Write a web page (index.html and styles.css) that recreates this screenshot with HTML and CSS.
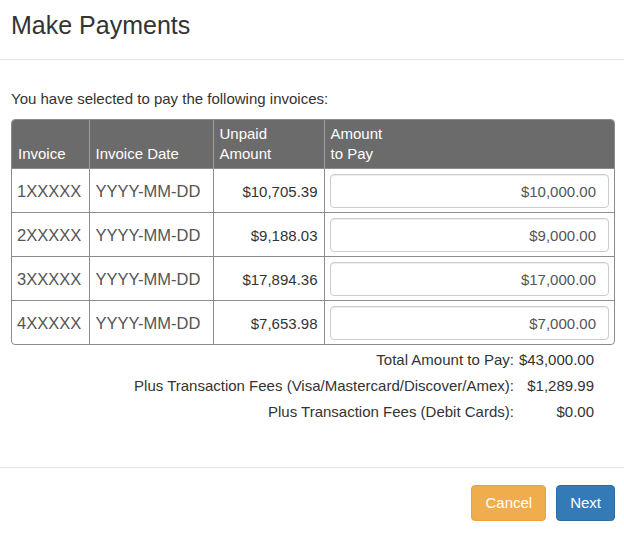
FILE: index.html
```html
<!DOCTYPE html>
<html lang="en">
<head>
  <meta charset="UTF-8">
  <meta name="viewport" content="width=device-width, initial-scale=1.0">
  <title>Make Payments</title>
  <link rel="stylesheet" href="styles.css">
</head>
<body>
  <!-- Modal Header -->
  <div class="modal-header">
    <h4 class="modal-title">Make Payments</h4>
  </div>

  <!-- Modal Body -->
  <div class="modal-body">
    <p class="intro">You have selected to pay the following invoices:</p>

    <div class="invoice-table-wrap">
      <table class="invoice-table">
        <thead>
          <tr>
            <th class="col-invoice">Invoice</th>
            <th class="col-date">Invoice Date</th>
            <th class="col-unpaid">Unpaid<br>Amount</th>
            <th class="col-pay">Amount<br>to Pay</th>
          </tr>
        </thead>
        <tbody>
          <tr>
            <td class="invoice-no">1XXXXX</td>
            <td class="invoice-date">YYYY-MM-DD</td>
            <td class="amount">$10,705.39</td>
            <td class="pay-cell"><input class="pay-input" type="text" value="$10,000.00"></td>
          </tr>
          <tr>
            <td class="invoice-no">2XXXXX</td>
            <td class="invoice-date">YYYY-MM-DD</td>
            <td class="amount">$9,188.03</td>
            <td class="pay-cell"><input class="pay-input" type="text" value="$9,000.00"></td>
          </tr>
          <tr>
            <td class="invoice-no">3XXXXX</td>
            <td class="invoice-date">YYYY-MM-DD</td>
            <td class="amount">$17,894.36</td>
            <td class="pay-cell"><input class="pay-input" type="text" value="$17,000.00"></td>
          </tr>
          <tr>
            <td class="invoice-no">4XXXXX</td>
            <td class="invoice-date">YYYY-MM-DD</td>
            <td class="amount">$7,653.98</td>
            <td class="pay-cell"><input class="pay-input" type="text" value="$7,000.00"></td>
          </tr>
        </tbody>
      </table>
    </div>

    <div class="totals">
      <span class="total-label">Total Amount to Pay:</span>
      <span class="total-value">$43,000.00</span>
      <span class="total-label">Plus Transaction Fees (Visa/Mastercard/Discover/Amex):</span>
      <span class="total-value">$1,289.99</span>
      <span class="total-label">Plus Transaction Fees (Debit Cards):</span>
      <span class="total-value">$0.00</span>
    </div>
  </div>

  <!-- Modal Footer -->
  <div class="modal-footer">
    <button class="btn btn-cancel">Cancel</button>
    <button class="btn btn-next">Next</button>
  </div>
</body>
</html>
```

FILE: styles.css
```css
/* Global Styles */
* {
  box-sizing: border-box;
  margin: 0;
  padding: 0;
}

body {
  font-family: "Liberation Sans", Arial, sans-serif;
  font-size: 15px;
  line-height: 21px;
  color: #333;
  background-color: #fff;
  width: 624px;
}

/* Header */
.modal-header {
  padding: 7px 11px 16px;
  border-bottom: 1px solid #e5e5e5;
}

.modal-title {
  font-size: 25px;
  font-weight: normal;
  line-height: 36px;
  color: #333;
}

/* Body */
.modal-body {
  padding: 28px 9px 45px 11px;
}

.intro {
  margin-bottom: 10px;
}

.invoice-table-wrap {
  border: 1px solid #8c8c8c;
  border-radius: 4px;
  overflow: hidden;
}

.invoice-table {
  width: 100%;
  border-collapse: collapse;
  table-layout: fixed;
}

.invoice-table th {
  background-color: #6b6b6b;
  color: #fff;
  font-weight: normal;
  text-align: left;
  vertical-align: bottom;
  line-height: 20px;
  padding: 4px 6px;
}

.invoice-table th + th {
  border-left: 1px solid #a0a0a0;
}

.col-invoice { width: 77px; }
.col-date { width: 124px; }
.col-unpaid { width: 111px; }

.invoice-table td {
  border-top: 1px solid #8c8c8c;
  padding: 5px 6px 4px;
  vertical-align: middle;
}

.invoice-table td + td {
  border-left: 1px solid #8c8c8c;
}

.invoice-no,
.invoice-date {
  font-size: 16.5px;
  color: #555;
}

.invoice-table td.invoice-no {
  padding-left: 5px;
}

.amount {
  text-align: right;
}

.invoice-table td.pay-cell {
  padding: 5px 5px 4px;
}

.pay-input {
  display: block;
  width: 100%;
  height: 34px;
  padding: 6px 12px;
  border: 1px solid #ccc;
  border-radius: 4px;
  box-shadow: inset 0 1px 1px rgba(0, 0, 0, 0.075);
  font-family: inherit;
  font-size: 15px;
  color: #555;
  text-align: right;
}

/* Totals */
.totals {
  display: grid;
  grid-template-columns: 1fr auto;
  justify-items: end;
  column-gap: 5px;
  row-gap: 5px;
  margin-top: 4px;
  padding-right: 21px;
}

/* Footer */
.modal-footer {
  border-top: 1px solid #e5e5e5;
  padding: 17px 9px 20px;
  display: flex;
  justify-content: flex-end;
  gap: 10px;
}

.btn {
  font-family: inherit;
  font-size: 15px;
  line-height: 18px;
  padding: 8px 13px;
  border: 1px solid transparent;
  border-radius: 4px;
  color: #fff;
  cursor: pointer;
}

.btn-cancel {
  background-color: #f0ad4e;
  border-color: #eea236;
}

.btn-next {
  background-color: #337ab7;
  border-color: #2e6da4;
}
```
